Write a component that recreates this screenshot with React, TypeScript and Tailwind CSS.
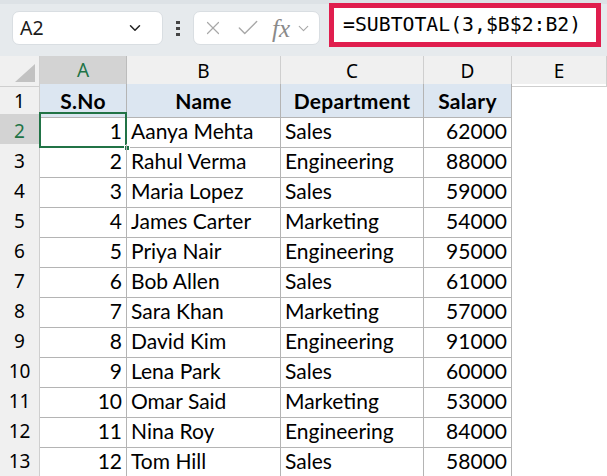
import { ChevronDown, X, Check } from "lucide-react";

const rows = [
  [1, "Aanya Mehta", "Sales", 62000],
  [2, "Rahul Verma", "Engineering", 88000],
  [3, "Maria Lopez", "Sales", 59000],
  [4, "James Carter", "Marketing", 54000],
  [5, "Priya Nair", "Engineering", 95000],
  [6, "Bob Allen", "Sales", 61000],
  [7, "Sara Khan", "Marketing", 57000],
  [8, "David Kim", "Engineering", 91000],
  [9, "Lena Park", "Sales", 60000],
  [10, "Omar Said", "Marketing", 53000],
  [11, "Nina Roy", "Engineering", 84000],
  [12, "Tom Hill", "Sales", 58000],
] as const;

const grid = "grid grid-cols-[40px_87px_154px_143px_88px_1fr]";
const cell = "border-r border-b border-[#b4b4b4] flex items-center px-[4px] pt-[1px] text-[21px] text-black";

export default function App() {
  return (
    <div className="w-[607px] h-[476px] overflow-hidden bg-white font-['Lato',sans-serif]">
      {/* formula bar */}
      <div className="h-[56px] bg-[#e6eaed] border-t-[4px] border-[#dde2e6] relative flex items-start">
        <div className="mt-[7px] ml-[12px] w-[151px] h-[34px] bg-white rounded-[7px] border border-[#d9dee2] flex items-center justify-between pl-[7px] pr-[18px] font-['Noto_Sans',sans-serif] text-[19.5px] text-[#1b1b1b]">
          <span>A2</span>
          <ChevronDown className="w-[18px] h-[18px] text-[#222]" strokeWidth={2} />
        </div>
        <div className="mt-[17px] ml-[13px] flex flex-col gap-[3px]">
          <span className="w-[4px] h-[3px] bg-[#444]" />
          <span className="w-[4px] h-[3px] bg-[#444]" />
          <span className="w-[4px] h-[3px] bg-[#444]" />
        </div>
        <div className="mt-[7px] ml-[13px] w-[127px] h-[34px] bg-white rounded-[7px] border border-[#d9dee2] flex items-center pl-[8px] text-[#a8a8a8]">
          <X className="w-[22px] h-[22px]" strokeWidth={1.3} />
          <Check className="w-[26px] h-[26px] ml-[11px]" strokeWidth={1.3} />
          <span className="ml-[11px] font-['Liberation_Serif',serif] italic text-[25px] text-[#8a8a8a] leading-none">fx</span>
          <ChevronDown className="w-[17px] h-[17px] ml-[5px]" strokeWidth={1.6} />
        </div>
        <div className="-mt-[1px] ml-[9px] w-[272px] h-[44px] border-[5px] border-[#e01e4e] bg-white flex items-center pl-[9px] font-['DejaVu_Sans_Mono',monospace] text-[19.8px] text-black">
          =SUBTOTAL(3,$B$2:B2)
        </div>
      </div>

      {/* column headers */}
      <div className={`${grid} h-[28px] bg-[#f0f0f0] font-['Noto_Sans',sans-serif] text-[19px]`}>
        <div className="relative border-r border-b border-[#cfcfcf]">
          <div className="absolute right-[4px] bottom-[4px] w-0 h-0 border-l-[20px] border-l-transparent border-b-[18px] border-b-[#c2c2c2]" />
        </div>
        <div className="bg-[#d3d3d3] border-r border-[#bcbcbc] border-b-2 border-b-[#217346] text-[#217346] flex items-center justify-center">A</div>
        {["B", "C", "D", "E"].map((c) => (
          <div key={c} className="border-r border-b border-[#cfcfcf] flex items-center justify-center text-black">
            {c}
          </div>
        ))}
      </div>

      {/* header row */}
      <div className={`${grid} h-[30px]`}>
        <div className="bg-[#f0f0f0] border-r border-b border-[#cfcfcf] flex items-center justify-center pt-[1px] text-[19px] font-['Noto_Sans',sans-serif]">1</div>
        {["S.No", "Name", "Department", "Salary"].map((h) => (
          <div key={h} className={`${cell} bg-[#dce6f1] justify-center font-bold tracking-[0.3px]`}>
            {h}
          </div>
        ))}
        <div />
      </div>

      {rows.map((r, i) => {
        const sel = i === 0;
        return (
          <div key={i} className={`${grid} h-[30px]`}>
            <div
              className={`border-r border-b border-[#cfcfcf] flex items-center justify-center pt-[1px] text-[19px] font-['Noto_Sans',sans-serif] ${
                sel ? "bg-[#d3d3d3] text-[#217346]" : "bg-[#f0f0f0] text-black"
              }`}
            >
              {i + 2}
            </div>
            <div className={`${cell} justify-end relative`}>
              {r[0]}
              {sel && (
                <>
                  <div className="absolute -left-[1px] -top-[2px] -right-[1px] -bottom-[1px] border-2 border-[#217346]" />
                  <div className="absolute -right-[4px] -bottom-[4px] w-[6px] h-[6px] bg-[#217346] border border-white" />
                </>
              )}
            </div>
            <div className={cell}>{r[1]}</div>
            <div className={cell}>{r[2]}</div>
            <div className={`${cell} justify-end`}>{r[3]}</div>
            <div />
          </div>
        );
      })}
    </div>
  );
}
